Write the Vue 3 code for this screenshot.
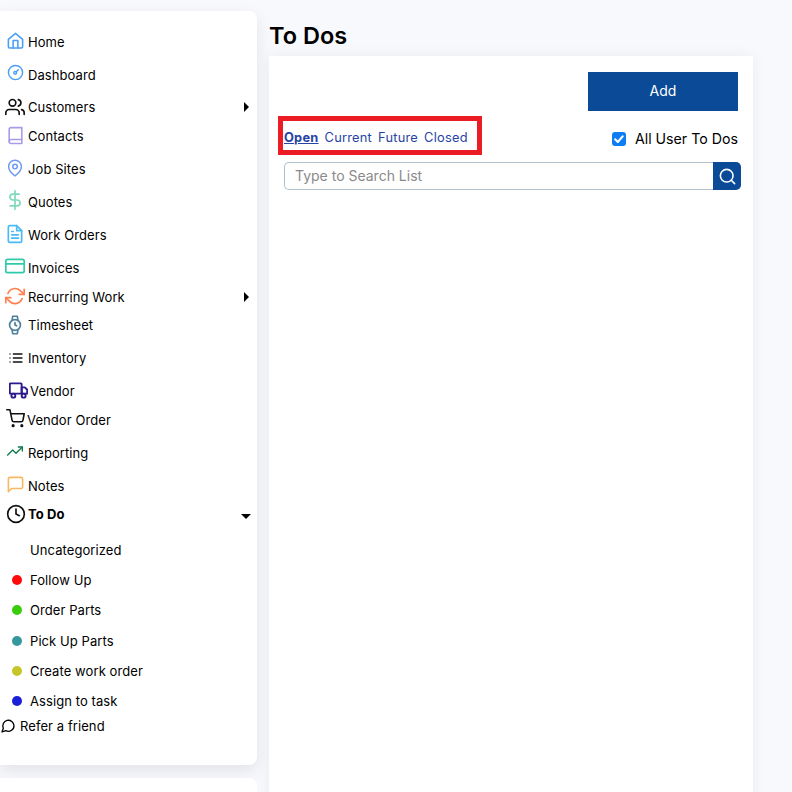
<template>
  <div class="page">
    <div class="side">
      <nav class="nav">
        <div
          v-for="item in menu"
          :key="item.label"
          class="row"
          :style="{ height: item.h + 'px' }"
        >
          <span class="slot" :style="{ width: (item.slot || 28) + 'px' }">
            <svg
              class="icon"
              viewBox="0 0 24 24"
              fill="none"
              :stroke="item.color"
              :stroke-width="item.sw || 2"
              stroke-linecap="round"
              stroke-linejoin="round"
              :style="{ width: item.w + 'px', height: item.w + 'px', left: item.x + 'px', top: item.y + 'px' }"
              v-html="item.icon"
            ></svg>
          </span>
          <span class="label" :class="{ bold: item.open }">{{ item.label }}</span>
          <span v-if="item.sub" class="arrow"></span>
          <span v-if="item.open" class="arrow-down"></span>
        </div>

        <div class="subs">
          <div v-for="s in subs" :key="s.label" class="sub" :style="{ height: s.h + 'px' }">
            <span class="dot" :style="{ background: s.color }"></span>
            <span class="label">{{ s.label }}</span>
          </div>
        </div>

        <div class="row refer">
          <span class="slot refer-slot">
            <svg class="refer-icon" viewBox="0 0 24 24" fill="none" stroke="#000" stroke-width="2" stroke-linecap="round" stroke-linejoin="round">
              <path d="M21 11.5a8.4 8.4 0 0 1-12.4 7.4L3 21l2-5.6A8.4 8.4 0 1 1 21 11.5z" />
            </svg>
          </span>
          <span class="label">Refer a friend</span>
        </div>
      </nav>
      <div class="nav-next"></div>
    </div>

    <main class="main">
      <h1 class="title">To Dos</h1>
      <section class="card">
        <div class="actions">
          <button class="add">Add</button>
        </div>
        <div class="filters">
          <div class="tabs">
            <a class="tab active">Open</a>
            <a class="tab">Current</a>
            <a class="tab">Future</a>
            <a class="tab">Closed</a>
          </div>
          <label class="all">
            <span class="check">
              <svg viewBox="0 0 16 16" width="14" height="14" fill="none" stroke="#fff" stroke-width="2.4" stroke-linecap="round" stroke-linejoin="round">
                <path d="M3.6 8.4l3 3 5.6-6.4" />
              </svg>
            </span>
            All User To Dos
          </label>
        </div>
        <div class="search">
          <input class="search-input" placeholder="Type to Search List" />
          <button class="search-btn">
            <svg viewBox="0 0 24 24" width="19" height="19" fill="none" stroke="#fff" stroke-width="2" stroke-linecap="round">
              <circle cx="11" cy="11" r="8" />
              <path d="M21 21l-4.2-4.2" />
            </svg>
          </button>
        </div>
      </section>
    </main>
  </div>
</template>

<script setup>
const menu = [
  { label: 'Home', h: 33, color: '#4a9ff5', w: 19, x: 6, y: -2, icon: '<path d="M3 10.5L12 3l9 7.5V20a1.5 1.5 0 0 1-1.5 1.5h-15A1.5 1.5 0 0 1 3 20z"/><path d="M9 21.5V12h6v9.5"/>' },
  { label: 'Dashboard', h: 32, color: '#4a9ff5', w: 17, x: 7, y: -2, icon: '<circle cx="12" cy="12" r="10"/><circle cx="11.5" cy="12.5" r="2"/><path d="M13 11l3-3"/>' },
  { label: 'Customers', h: 29, color: '#111', w: 20, x: 5, y: -1.5, sub: true, icon: '<path d="M17 21v-2a4 4 0 0 0-4-4H5a4 4 0 0 0-4 4v2"/><circle cx="9" cy="7" r="4"/><path d="M23 21v-2a4 4 0 0 0-3-3.9"/><path d="M16 3.1a4 4 0 0 1 0 7.8"/>' },
  { label: 'Contacts', h: 33, color: '#a79bea', w: 19, x: 5.5, y: -1.5, icon: '<path d="M4 19.5A2.5 2.5 0 0 1 6.5 17H20"/><path d="M6.5 2H20v20H6.5A2.5 2.5 0 0 1 4 19.5v-15A2.5 2.5 0 0 1 6.5 2z"/>' },
  { label: 'Job Sites', h: 33, color: '#6f9cf0', w: 18, x: 6, y: -1, icon: '<path d="M20.5 10c0 6.5-8.5 12.5-8.5 12.5S3.5 16.5 3.5 10a8.5 8.5 0 0 1 17 0z"/><circle cx="12" cy="10" r="3"/>' },
  { label: 'Quotes', h: 33, color: '#7dd9bb', w: 20, x: 5, y: -3, icon: '<path d="M12 1v22"/><path d="M17 5H9.5a3.5 3.5 0 0 0 0 7h5a3.5 3.5 0 0 1 0 7H6"/>' },
  { label: 'Work Orders', h: 33, color: '#4cb9f7', w: 20, x: 5, y: -2, icon: '<path d="M14 2H6a2 2 0 0 0-2 2v16a2 2 0 0 0 2 2h12a2 2 0 0 0 2-2V8z"/><path d="M14 2v6h6"/><path d="M8 13h8M8 17h8M8 9h2"/>' },
  { label: 'Invoices', h: 29, color: '#2ecba8', w: 20, x: 5, y: -3, icon: '<rect x="1" y="4" width="22" height="16" rx="2"/><path d="M1 9.5h22"/>' },
  { label: 'Recurring Work', h: 28, color: '#ff7f50', w: 20, x: 5, y: -2, sub: true, icon: '<path d="M23 4v6h-6"/><path d="M1 20v-6h6"/><path d="M3.5 9a9 9 0 0 1 14.8-3.4L23 10"/><path d="M1 14l4.6 4.4A9 9 0 0 0 20.5 15"/>' },
  { label: 'Timesheet', h: 33, color: '#4f7f9b', w: 20, x: 5, y: -1.5, icon: '<circle cx="12" cy="12" r="6.5"/><path d="M12 9v3l2 1"/><path d="M8.5 6.5L9.2 1.5h5.6l.7 5M8.5 17.5l.7 5h5.6l.7-5"/>' },
  { label: 'Inventory', h: 33, color: '#111', w: 16, x: 8, y: 0.5, icon: '<path d="M8 6h13M8 12h13M8 18h13"/><path d="M3 6h.01M3 12h.01M3 18h.01"/>' },
  { label: 'Vendor', h: 29, color: '#2a1a8c', w: 19, x: 8.5, y: -1, slot: 30, sw: 2.4, icon: '<rect x="1" y="3" width="15" height="13" rx="1"/><path d="M16 8h4l3 3v5h-7z"/><circle cx="5.5" cy="18.5" r="2.5"/><circle cx="18.5" cy="18.5" r="2.5"/>' },
  { label: 'Vendor Order', h: 33, color: '#111', w: 19, x: 5.5, y: -2, slot: 27, icon: '<circle cx="9" cy="21" r="1"/><circle cx="20" cy="21" r="1"/><path d="M1 1h4l2.7 13.4a2 2 0 0 0 2 1.6h9.7a2 2 0 0 0 2-1.6L23 6H6"/>' },
  { label: 'Reporting', h: 33, color: '#0f7a4d', w: 16, x: 7, y: -1, icon: '<path d="M23 6l-9.5 9.5-5-5L1 18"/><path d="M17 6h6v6"/>' },
  { label: 'Notes', h: 28, color: '#f7b861', w: 19, x: 6, y: -2.5, icon: '<path d="M21 15a2 2 0 0 1-2 2H7l-4 4V5a2 2 0 0 1 2-2h14a2 2 0 0 1 2 2z"/>' },
  { label: 'To Do', h: 36, color: '#111', w: 20, x: 5.5, y: -1.5, open: true, icon: '<circle cx="12" cy="12" r="10"/><path d="M12 6v6l4 2"/>' },
]

const subs = [
  { label: 'Uncategorized', color: 'transparent', h: 30 },
  { label: 'Follow Up', color: '#fe0a0a', h: 30 },
  { label: 'Order Parts', color: '#38cd0b', h: 31 },
  { label: 'Pick Up Parts', color: '#36989e', h: 30 },
  { label: 'Create work order', color: '#c6c62b', h: 30 },
  { label: 'Assign to task', color: '#1a1fd8', h: 25 },
]
</script>

<style>
html,
body {
  overflow: hidden;
  background: #f8f9fc;
}
</style>

<style scoped>
.page {
  display: flex;
  height: 792px;
  overflow: hidden;
  font-family: Inter, "Liberation Sans", sans-serif;
  color: #000;
}

.side {
  width: 257px;
  flex-shrink: 0;
  padding-top: 11px;
}

.nav {
  height: 754px;
  box-sizing: border-box;
  padding-top: 22px;
  background: #fff;
  border-radius: 0 8px 8px 0;
  box-shadow: 0 6px 16px rgba(30, 40, 70, 0.1);
}

.row {
  display: flex;
  align-items: flex-start;
  padding-right: 8px;
}

.slot {
  position: relative;
  height: 18px;
  flex-shrink: 0;
}

.icon {
  position: absolute;
}

.label {
  font-size: 13px;
  line-height: 18px;
  letter-spacing: 0.08px;
  white-space: nowrap;
}

.bold {
  font-weight: 700;
}

.arrow {
  margin: 4px 0 0 auto;
  width: 0;
  height: 0;
  border-top: 5.5px solid transparent;
  border-bottom: 5.5px solid transparent;
  border-left: 5.5px solid #000;
}

.arrow-down {
  margin: 9px -2px 0 auto;
  width: 0;
  height: 0;
  border-left: 5px solid transparent;
  border-right: 5px solid transparent;
  border-top: 5px solid #000;
}

.sub {
  display: flex;
  align-items: flex-start;
}

.dot {
  width: 10px;
  height: 10px;
  margin: 4px 8px 0 12px;
  border-radius: 50%;
  flex-shrink: 0;
}

.refer-slot {
  width: 20px;
}

.refer-icon {
  position: absolute;
  left: 0;
  top: 1px;
  width: 16px;
  height: 16px;
}

.nav-next {
  height: 40px;
  margin-top: 13px;
  background: #fff;
  border-radius: 0 8px 0 0;
}

.main {
  width: 484px;
  margin-left: 12px;
}

.title {
  margin: 0;
  padding-top: 22px;
  height: 34px;
  font-size: 23.5px;
  line-height: 28px;
  font-weight: 600;
}

.card {
  box-sizing: border-box;
  height: 800px;
  padding: 16px 15px;
  background: #fff;
  box-shadow: 0 0 14px rgba(30, 40, 70, 0.06);
}

.actions {
  display: flex;
  justify-content: flex-end;
}

.add {
  width: 150px;
  height: 39px;
  padding: 0 0 2px;
  border: none;
  background: #0a4a97;
  color: #fff;
  font-family: Inter, "Liberation Sans", sans-serif;
  font-size: 14px;
  font-weight: 400;
}

.filters {
  display: flex;
  justify-content: space-between;
  align-items: center;
  margin: 5px 0 7px -6px;
}

.tabs {
  display: flex;
  gap: 6px;
  box-sizing: border-box;
  height: 39px;
  width: 204px;
  padding: 9px 0 0 1px;
  border: 5px solid #ec1c24;
  font-size: 12.8px;
  color: #2743a5;
}

.tab {
  line-height: 16px;
  letter-spacing: 0.25px;
}

.active {
  font-weight: 700;
  text-decoration: underline;
}

.all {
  display: flex;
  align-items: center;
  gap: 9px;
  margin-top: 6px;
  font-size: 14.2px;
}

.check {
  display: flex;
  width: 14px;
  height: 14px;
  border-radius: 3px;
  background: #0d7df4;
}

.search {
  display: flex;
  width: 457px;
  height: 28px;
}

.search-input {
  flex: 1;
  min-width: 0;
  box-sizing: border-box;
  padding: 0 10px 2px;
  border: 1px solid #b0c0cc;
  border-right: none;
  border-radius: 5px 0 0 5px;
  outline: none;
  font-family: Inter, "Liberation Sans", sans-serif;
  font-size: 14px;
}

.search-input::placeholder {
  color: #8a8a8a;
}

.search-btn {
  display: flex;
  align-items: center;
  justify-content: center;
  width: 28px;
  padding: 0;
  border: none;
  border-radius: 0 5px 5px 0;
  background: #0a4a97;
}
</style>
